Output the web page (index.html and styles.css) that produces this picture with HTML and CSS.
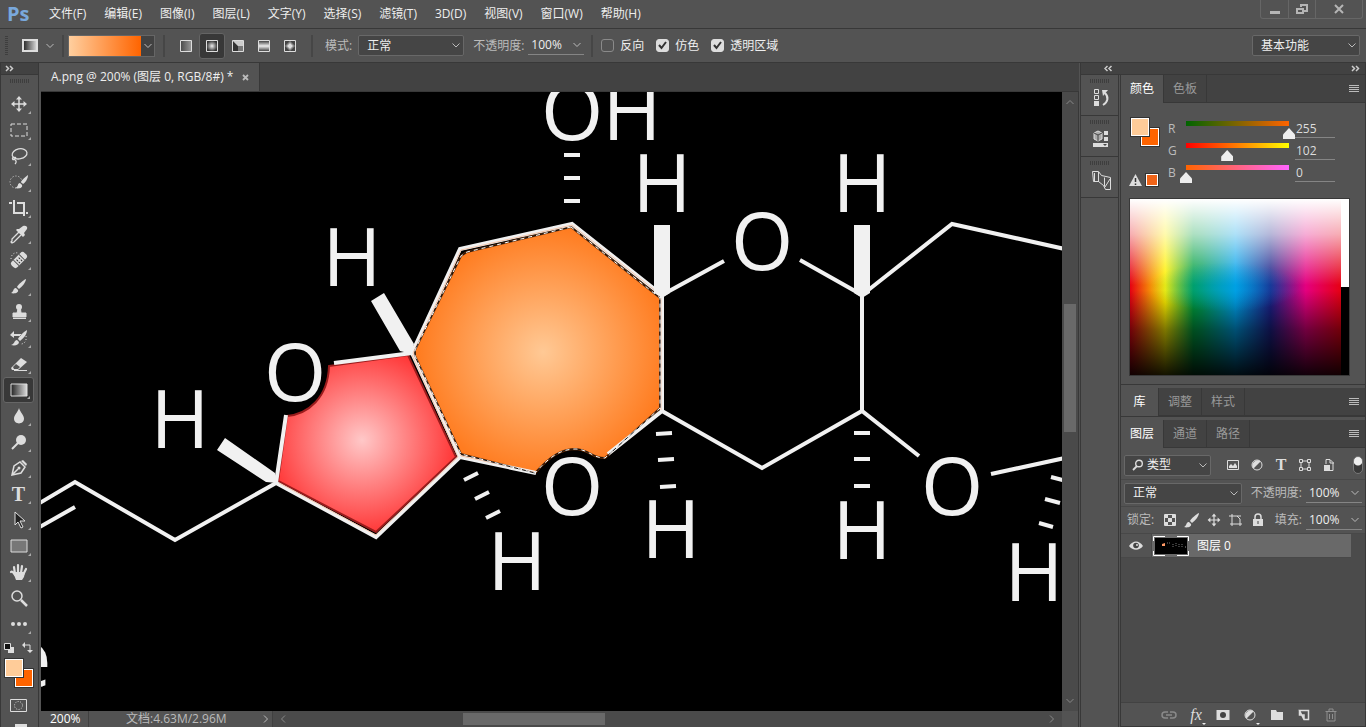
FILE: index.html
```html
<!DOCTYPE html>
<html lang="zh-CN">
<head>
<meta charset="utf-8">
<title>A.png - Photoshop</title>
<link rel="stylesheet" href="styles.css">
</head>
<body>
<svg class="defs" aria-hidden="true">
  <defs>
    <linearGradient id="gray" x1="0" x2="1"><stop stop-color="#222"/><stop offset="1" stop-color="#ddd"/></linearGradient>
    <linearGradient id="soft" x1="0" x2="1"><stop stop-color="#484848"/><stop offset="1" stop-color="#999"/></linearGradient>
    <linearGradient id="reflect" x1="0" x2="0" y1="0" y2="1"><stop stop-color="#333"/><stop offset=".5" stop-color="#eee"/><stop offset="1" stop-color="#333"/></linearGradient>
    <radialGradient id="spot"><stop stop-color="#eee"/><stop offset="1" stop-color="#333"/></radialGradient>
  </defs>
  <symbol id="chev" viewBox="0 0 10 8"><path d="M1.500 2l3.500 3.500L8.500 2" fill="none" stroke="currentColor"/></symbol>
  <symbol id="menu" viewBox="0 0 10 8"><path d="M0 .5h10M0 2.500h10M0 4.500h10M0 6.500h10" stroke="currentColor"/></symbol>
  <symbol id="brush" viewBox="-10 -10 20 20"><path d="M7-7C4-6-1-1-2 1l2 2C3 1 7-4 7-7zM-3 2c-3-.5-2 4-5 5 3 1 8 0 7-3z" fill="currentColor"/></symbol>
  <symbol id="move" viewBox="-10 -10 20 20"><path d="M-6 0H6M0-6V6" stroke="currentColor" stroke-width="1.500"/><path d="M0-8l3 3.500h-6zM0 8l3-3.500h-6zM-8 0l3.500-3v6zM8 0L4.500-3v6z" fill="currentColor"/></symbol>
  <symbol id="half" viewBox="-10 -10 20 20"><circle r="5" fill="none" stroke="currentColor"/><path d="M-3.500 3.500A5 5 0 0 1 3.500-3.500z" fill="currentColor"/></symbol>
</svg>
<div class="app">
  <header class="menubar">
    <span class="logo">Ps</span>
    <nav class="menus">
      <button>文件(F)</button><button>编辑(E)</button><button>图像(I)</button><button>图层(L)</button><button>文字(Y)</button><button>选择(S)</button><button>滤镜(T)</button><button>3D(D)</button><button>视图(V)</button><button>窗口(W)</button><button>帮助(H)</button>
    </nav>
    <div class="window-buttons">
      <button aria-label="最小化"><svg width="14" height="14"><path d="M2 10.500h10" stroke="#b5b5b5" stroke-width="3"/></svg></button>
      <button aria-label="还原"><svg width="14" height="14" fill="none" stroke="#b5b5b5" stroke-width="2"><path d="M6 5V3h6v6H9"/><path d="M2 7h6v4H2z"/></svg></button>
      <button class="close" aria-label="关闭"><svg width="14" height="14"><path d="M3 3l8 8M11 3l-8 8" stroke="#b5b5b5" stroke-width="2"/></svg></button>
    </div>
  </header>

  <section class="options">
    <span class="grip-v"></span>
    <button class="preset" aria-label="渐变工具"><svg width="16" height="13"><path d="M1 1h14v11H1z" fill="url(#gray)" stroke="#ddd" stroke-width="2"/></svg><svg class="chev"><use href="#chev"/></svg></button>
    <span class="sep"></span>
    <button class="gradient" aria-label="编辑渐变"><span class="ramp"></span><svg class="chev"><use href="#chev"/></svg></button>
    <span class="sep"></span>
    <div class="modes">
      <button aria-label="线性渐变"><svg width="12" height="12"><path d="M.5.5h11v11H.5z" fill="url(#soft)" stroke="#ddd"/></svg></button>
      <button class="active" aria-label="径向渐变"><svg width="12" height="12"><path d="M.5.5h11v11H.5z" fill="url(#spot)" stroke="#ddd"/></svg></button>
      <button aria-label="角度渐变"><svg width="12" height="12"><path d="M.5.5h11v11H.5z" fill="#777" stroke="#ddd"/><path d="M1 1l5 5v5H1z" fill="#333"/><path d="M1 1h10v5H6z" fill="#ccc"/></svg></button>
      <button aria-label="对称渐变"><svg width="12" height="12"><path d="M.5.5h11v11H.5z" fill="url(#reflect)" stroke="#ddd"/></svg></button>
      <button aria-label="菱形渐变"><svg width="12" height="12"><path d="M.5.5h11v11H.5z" fill="#444" stroke="#ddd"/><path d="M6 1l5 5-5 5-5-5z" fill="#888"/><path d="M6 3l3 3-3 3-3-3z" fill="#ddd"/></svg></button>
    </div>
    <span class="sep"></span>
    <label class="dim" for="mode">模式:</label>
    <select id="mode" class="select mode-select"><option>正常</option></select>
    <label class="dim opacity-label" for="opacity">不透明度:</label>
    <span class="field"><input id="opacity" value="100%"><svg class="chev"><use href="#chev"/></svg></span>
    <span class="sep"></span>
    <div class="checks">
      <label><input type="checkbox">反向</label>
      <label><input type="checkbox" checked>仿色</label>
      <label><input type="checkbox" checked>透明区域</label>
    </div>
    <select class="select workspace" aria-label="工作区"><option>基本功能</option></select>
  </section>

  <main class="work">
    <aside class="toolbar">
      <div class="dock-head"><svg width="9" height="7"><path d="M1 1l2.500 2.500L1 6M5 1l2.500 2.500L5 6" fill="none" stroke="#ccc" stroke-width="1.500"/></svg></div>
      <div class="grip"></div>
      <div class="tools">
        <button aria-label="移动"><svg><use href="#move"/></svg></button>
        <button aria-label="矩形选框"><svg viewBox="-10 -10 20 20"><path d="M-8-6H8V6H-8z" fill="none" stroke="#ddd" stroke-dasharray="4 2"/></svg></button>
        <button aria-label="套索"><svg viewBox="-10 -10 20 20" fill="none" stroke="#ddd" stroke-width="1.300"><ellipse cx="1" cy="-2" rx="7.500" ry="5" transform="rotate(-12)"/><path d="M-5 1c-3 1-1 4 1 2s-1-2-2-1M-4 4c2 1 1 3 0 4"/></svg></button>
        <button aria-label="快速选择"><svg viewBox="-10 -10 20 20"><circle cx="-3" r="6" fill="none" stroke="#ddd" stroke-dasharray="1 2"/><path d="M9-7C6-5 3-2 2 0l2 2c2-1 5-5 5-9zM1 1c-3 0-1 4-5 5 4 1 8 0 7-3z" fill="#ddd"/></svg></button>
        <button aria-label="裁剪"><svg viewBox="-10 -10 20 20"><path d="M-10-5h3M-5-8V5H5M-2-5h7V8M7 5h2" fill="none" stroke="#ddd" stroke-width="2"/></svg></button>
        <button aria-label="吸管"><svg viewBox="-10 -10 20 20"><path d="M0-2l-7 7v2l-1 1 1 1 2-1 7-7" fill="none" stroke="#ddd" stroke-width="1.300"/><path d="M-2-5l2 0 4-3c3-1 5 1 4 3L5-1l1 2-2 2-7-7z" fill="#ddd"/></svg></button>
        <button aria-label="修复画笔"><svg viewBox="-10 -10 20 20"><path d="M-8-1c0-4 3-7 7-6" fill="none" stroke="#ddd" stroke-dasharray="1 2"/><g transform="rotate(-45)"><rect x="-9" y="-4" width="18" height="8" rx="3" fill="#ddd"/><path d="M-4-4v8M4-4v8" stroke="#555"/><path d="M-2-1h1M1-1h1M-2 2h1M1 2h1" stroke="#333" stroke-width="2"/></g></svg></button>
        <button aria-label="画笔"><svg><use href="#brush"/></svg></button>
        <button aria-label="仿制图章"><svg viewBox="-10 -10 20 20"><circle cy="-5" r="3" fill="#ddd"/><path d="M-1-3h2.500L2 1h5v4H-6V1h4zM-6 6.500H7" fill="#ddd" stroke="#ddd"/></svg></button>
        <button aria-label="历史记录画笔"><svg viewBox="-10 -10 20 20"><path d="M-9-3l4-4v3h7v2h-7v2zM8-8C4-6 0-1-1 1l2 2c4-3 7-7 7-11zM-2 2c-3 0-2 4-6 5 4 1 8 0 8-3z" fill="#ddd"/><path d="M7-2c1 5-2 8-5 8" fill="none" stroke="#ddd" stroke-dasharray="1 2"/></svg></button>
        <button aria-label="橡皮擦"><svg viewBox="-10 -10 20 20"><path d="M-8 4L2-6l6 4L-1 6h-6z" fill="#ddd"/><path d="M-6 3l3-3 4 3-2 2h-4z" fill="#555"/><path d="M-5 6.500H8" stroke="#ddd"/></svg></button>
        <button class="active" aria-label="渐变"><svg viewBox="-10 -10 20 20"><path d="M-8-6H8V6H-8z" fill="url(#gray)" stroke="#ddd"/></svg></button>
        <button aria-label="模糊"><svg viewBox="-10 -10 20 20"><path d="M0-8c1 4 5 7 5 10.500C5 9-5 9-5 2.500-5-1-1-4 0-8z" fill="#ddd"/></svg></button>
        <button aria-label="减淡"><svg viewBox="-10 -10 20 20"><circle cx="2" cy="-2" r="5" fill="#ddd"/><path d="M-1 1l-6 6" stroke="#ddd" stroke-width="2"/></svg></button>
        <button aria-label="钢笔"><svg viewBox="-10 -10 20 20"><path d="M-7 7l2-9 6-4 5 5-4 6zM-7 7l6-6" fill="none" stroke="#ddd" stroke-width="1.500"/><circle r="1.500" fill="#ddd"/><path d="M2-7l5 5 1-2-4-4z" fill="#ddd"/></svg></button>
        <button class="type-tool" aria-label="文字"><b>T</b></button>
        <button aria-label="路径选择"><svg viewBox="-10 -10 20 20"><path d="M-4-8V5l3-3 3 6 2-1-3-6h5z" fill="#222" stroke="#ddd"/></svg></button>
        <button aria-label="矩形"><svg viewBox="-10 -10 20 20"><path d="M-8-6H8V6H-8z" fill="#777" stroke="#ddd"/></svg></button>
        <button aria-label="抓手"><svg viewBox="-10 -10 20 20"><path d="M-8 0c1-1 2 0 4 3M-4 2l-1-7M-1 1v-8M2 1l1-7M4 3l3-6" stroke="#ddd" stroke-width="2.200" stroke-linecap="round" fill="none"/><path d="M-6 0L6 0 5 5 3 8h-6z" fill="#ddd"/></svg></button>
        <button class="single" aria-label="缩放"><svg viewBox="-10 -10 20 20"><circle cx="-2" cy="-2" r="5" fill="none" stroke="#ddd" stroke-width="1.500"/><path d="M2 2l6 6" stroke="#ddd" stroke-width="2.500"/></svg></button>
        <button aria-label="更多"><svg viewBox="-10 -10 20 20" fill="#ddd"><circle cx="-6" r="2"/><circle r="2"/><circle cx="6" r="2"/></svg></button>
      </div>
      <div class="swatch-tools">
        <button aria-label="默认颜色"><svg width="10" height="10"><path d="M4 4h6v6H4z" fill="#ddd"/><path d="M.5.5h6v6h-6z" fill="#111" stroke="#ddd"/></svg></button>
        <button aria-label="切换颜色"><svg width="11" height="11"><path d="M2 3h6v6" fill="none" stroke="#ddd"/><path d="M3 0v6L0 3zM5 8h6l-3 3z" fill="#ddd"/></svg></button>
      </div>
      <div class="swatches"><button class="fg" aria-label="前景色"></button><button class="bg" aria-label="背景色"></button></div>
      <button class="mask" aria-label="快速蒙版"><svg width="17" height="13"><path d="M.5.5h16v12H.5z" fill="none" stroke="#ddd"/><circle cx="8.500" cy="6.500" r="4" fill="none" stroke="#ddd" stroke-dasharray="1 1.500"/></svg></button>
      <button class="screen" aria-label="屏幕模式"></button>
    </aside>

    <section class="document">
      <div class="doc-tabs"><div class="doc-tab"><span>A.png @ 200% (图层 0, RGB/8#) *</span><button aria-label="关闭文档"><svg width="7" height="7"><path d="M1 1l5 5M6 1L1 6" stroke="#bbb" stroke-width="1.800"/></svg></button></div></div>
      <div class="stage">
        <div class="canvas">
          <svg viewBox="41 92 1021 619" preserveAspectRatio="xMinYMin slice">
            <defs>
              <radialGradient id="orange" gradientUnits="userSpaceOnUse" cx="543" cy="352" r="125"><stop stop-color="#ffc995"/><stop offset="1" stop-color="#ff7c20"/></radialGradient>
              <radialGradient id="red" gradientUnits="userSpaceOnUse" cx="362" cy="440" r="96"><stop stop-color="#ffc8c8"/><stop offset="1" stop-color="#ff3434"/></radialGradient>
            </defs>
            <path d="M329 366L408 355 456 457 376 532 278 481 287 416C308 414 328 398 329 366z" fill="url(#red)" stroke="#9a1c1c" stroke-width="2"/>
            <path d="M571 227L467 252 461 256 415 350 415 356 461 454 535 473C551 455 562 449 576 449 590 450 592 458 605 458L660 408V298z" fill="url(#orange)" stroke="#7a3508" stroke-width="2"/>
            <g class="bonds">
              <path d="M662 295L572 224 460 249 412 353 460 457 536 473M608 454L662 411V295L724 261M334 363L412 353M460 457L376 537 276 483 286 415M276 483L175 540 75 482 38 504M75 507L38 528M662 411L762 468 862 411 919 456M862 411V295L800 260M862 295L952 224 1065 249M991 474L1065 458"/>
              <path d="M564 155h16M564 178h16M564 201h16M656 434l16-1M658 460l16-1M660 487l16-1M854 433h16M854 459h16M854 486h16M464 480l14-7M475 499l14-7M486 518l14-7M1051 477l15 4M1045 499l15 4M1039 523l14 4"/>
            </g>
            <path class="warm" d="M661 295L572 225 461 250 413 353 461 456 534 472M412 355L458 457 376 535 279 483M661 298V410"/>
            <path class="wedges" d="M654 225h16v68l-8 5-8-5zM854 225h16v68l-8 5-8-5zM371 301l13-8 30 51-2 10-12-3zM217 450l8-12 50 35 2 10-11-1z"/>
            <path class="ants" d="M571 227L467 252 461 256 415 350 415 356 461 454 535 473C551 455 562 449 576 449 590 450 592 458 605 458L660 408V298z"/>
            <path class="ants march" d="M571 227L467 252 461 256 415 350 415 356 461 454 535 473C551 455 562 449 576 449 590 450 592 458 605 458L660 408V298z"/>
            <g class="atoms">
              <text x="572" y="140">O</text><text x="632" y="140">H</text><text x="662" y="212">H</text><text x="862" y="212">H</text><text x="762" y="270">O</text><text x="352" y="286">H</text><text x="295" y="401">O</text><text x="180" y="448">H</text><text x="572" y="515">O</text><text x="517" y="590">H</text><text x="671" y="558">H</text><text x="862" y="559">H</text><text x="952" y="515">O</text><text x="1034" y="601">H</text><text x="29" y="687">e</text>
            </g>
          </svg>
        </div>
        <div class="vscroll"><svg class="chev up"><use href="#chev"/></svg><div class="vtrack"><i></i><b></b><i class="after"></i></div><svg class="chev"><use href="#chev"/></svg></div>
      </div>
      <footer class="status"><span class="zoom">200%</span><span class="docsize">文档:4.63M/2.96M</span><button aria-label="状态菜单"><svg class="chev right"><use href="#chev"/></svg></button>
        <div class="hscroll"><svg class="chev left"><use href="#chev"/></svg><div class="htrack"><i></i><b></b><i class="after"></i></div><svg class="chev right"><use href="#chev"/></svg></div><span class="corner"></span>
      </footer>
    </section>

    <aside class="docks">
      <div class="dock-head wide"><svg width="9" height="7"><path d="M3.500 1L1 3.500 3.500 6M7.500 1L5 3.500 7.500 6" fill="none" stroke="#ccc" stroke-width="1.500"/></svg><svg width="9" height="7"><path d="M1 1l2.500 2.500L1 6M5 1l2.500 2.500L5 6" fill="none" stroke="#ccc" stroke-width="1.500"/></svg></div>
      <div class="dock-cols">
        <div class="icon-dock">
          <div class="icon-group"><span class="grip"></span><button aria-label="历史记录"><svg viewBox="0 0 20 20"><path d="M2.500 1.500h4v4h-4zM2.500 7.500h4v4h-4z" fill="none" stroke="#ddd"/><path d="M2 13h5v5H2z" fill="#ddd"/><path d="M11 17c5-3 6-8 2-12" fill="none" stroke="#ddd" stroke-width="2"/><path d="M10 2h6l-5 6z" fill="#ddd"/></svg></button></div>
          <div class="icon-group"><span class="grip"></span><button aria-label="属性"><svg viewBox="0 0 20 20"><path d="M6 2l4 2v6l-4 2-4-2V4z" fill="#aaa" stroke="#ddd"/><path d="M2 4l4 2 4-2M6 6v6" fill="none" stroke="#444"/><path d="M12 2h4v4h-4zM12 8h4v4h-4zM1 14h15v4H1z" fill="#ddd"/><path d="M11 15h4l-2 2z" fill="#444"/></svg></button></div>
          <div class="icon-group"><span class="grip"></span><button aria-label="其他面板"><svg viewBox="0 0 20 20" fill="none" stroke="#ddd"><path d="M.5 1.500h6l3 4 9 2v12h-5l-2-4-5-4h-5zM2.500 3v8M6.500 2v10M12.500 7.500v9M18 9l-5 8"/></svg></button></div>
        </div>
        <div class="panels">
          <section class="panel">
            <div class="tabs"><button class="on">颜色</button><button>色板</button><svg class="burger"><use href="#menu"/></svg></div>
            <div class="color-body">
              <div class="color-top">
                <div class="color-left"><div class="swatches"><button class="fg" aria-label="前景"></button><button class="bg" aria-label="背景"></button></div>
                  <div class="warning"><svg width="13" height="12"><path d="M6.500 0L13 12H0z" fill="#ddd"/><path d="M6.500 4v4M6.500 9.500V11" stroke="#333" stroke-width="1.500"/></svg><span></span></div></div>
                <div class="sliders">
                  <label for="r">R</label><input id="r" class="r" type="range" max="255" value="255"><input aria-label="R 值" value="255">
                  <label for="g">G</label><input id="g" class="g" type="range" max="255" value="102"><input aria-label="G 值" value="102">
                  <label for="b">B</label><input id="b" class="b" type="range" max="255" value="0"><input aria-label="B 值" value="0">
                </div>
              </div>
              <div class="spectrum"><div class="hues"></div><div class="bw"></div></div>
            </div>
          </section>
          <section class="panel"><div class="tabs"><button class="on">库</button><button>调整</button><button>样式</button><svg class="burger"><use href="#menu"/></svg></div></section>
          <section class="panel layers">
            <div class="tabs"><button class="on">图层</button><button>通道</button><button>路径</button><svg class="burger"><use href="#menu"/></svg></div>
            <div class="filter-row">
              <span class="search-select"><svg width="12" height="12"><circle cx="7" cy="4.500" r="3.300" fill="none" stroke="#ddd" stroke-width="1.400"/><path d="M5 7l-4 4" stroke="#ddd" stroke-width="1.800"/></svg><select class="select" aria-label="图层过滤"><option>类型</option></select></span>
              <div class="filters">
                <button aria-label="像素"><svg viewBox="-10 -10 20 20"><path d="M-5.500-4.500h11v9h-11z" fill="none" stroke="#ddd"/><path d="M-4 3v-2l2-2 2 2 2-3 2 3v2z" fill="#ddd"/></svg></button>
                <button aria-label="调整图层"><svg><use href="#half"/></svg></button>
                <button aria-label="文字图层"><b>T</b></button>
                <button aria-label="形状图层"><svg viewBox="-10 -10 20 20"><path d="M-4-4h8v8h-8z" fill="none" stroke="#ddd"/><path d="M-5.500-5.500h3v3h-3zM2.500-5.500h3v3h-3zM-5.500 2.500h3v3h-3zM2.500 2.500h3v3h-3z" fill="#535353" stroke="#ddd"/></svg></button>
                <button aria-label="智能对象"><svg viewBox="-10 -10 20 20"><path d="M-3-1v-4.500h4l3 3v8H1M1-5v3h4" fill="none" stroke="#ddd"/><path d="M-5 0h6v6h-6z" fill="#ddd"/></svg></button>
              </div>
              <button class="toggle" aria-label="过滤开关"></button>
            </div>
            <div class="blend-row"><select class="select" aria-label="混合模式"><option>正常</option></select><label class="dim" for="lop">不透明度:</label><span class="field"><input id="lop" value="100%"><svg class="chev"><use href="#chev"/></svg></span></div>
            <div class="lock-row"><span class="dim">锁定:</span>
              <div class="locks">
                <button aria-label="锁定透明像素"><svg viewBox="-10 -10 20 20"><path d="M-5.500-5.500h11v11h-11z" fill="none" stroke="#ddd"/><path d="M-5-5h3v3h-3zM2-5h3v3H2zM-2-2h4v4h-4zM-5 2h3v3h-3zM2 2h3v3H2z" fill="#ddd"/></svg></button>
                <button aria-label="锁定图像像素"><svg><use href="#brush"/></svg></button>
                <button class="small" aria-label="锁定位置"><svg><use href="#move"/></svg></button>
                <button aria-label="锁定画板"><svg viewBox="-10 -10 20 20"><path d="M-7-4H5M-4-6V6M-6 4H6M4 6v-7L1-4" fill="none" stroke="#ddd"/></svg></button>
                <button aria-label="锁定全部"><svg viewBox="-10 -10 20 20"><path d="M-5-1H5v7H-5z" fill="#ddd"/><path d="M-3-1v-2c0-4 6-4 6 0v2" fill="none" stroke="#ddd" stroke-width="1.500"/><path d="M0 1v3" stroke="#444"/></svg></button>
              </div>
              <label class="dim" for="fill">填充:</label><span class="field"><input id="fill" value="100%"><svg class="chev"><use href="#chev"/></svg></span></div>
            <div class="layer-list">
              <div class="layer"><button class="eye" aria-label="可见性"><svg width="14" height="10"><path d="M0 5C4-1 10-1 14 5 10 10 4 10 0 5z" fill="#ddd"/><circle cx="7" cy="4.500" r="2.800" fill="#444"/><circle cx="8" cy="4" r="1" fill="#ddd"/></svg></button>
                <div class="layer-main"><svg width="36" height="20"><path d="M2 2h32v16H2z" fill="#000"/><path d="M.5 5V.5H12M24 .5h11.500V5M.5 15v4.500H12M24 19.500h11.500V15" fill="none" stroke="#fff"/><path d="M9 8l3-1v3H9z" fill="#f96"/><path d="M14 7h4M20 8v4M23 7v4M26 8v3M29 8v3" stroke="#777" stroke-dasharray="1 1"/><path d="M32 11h1" stroke="#999"/></svg><span>图层 0</span></div></div>
            </div>
            <footer class="layer-actions">
              <button aria-label="链接图层"><svg viewBox="-10 -10 20 20"><path d="M-1-3h-3c-4 0-4 6 0 6h3M1-3h3c4 0 4 6 0 6H1M-3 0h6" fill="none" stroke="#8a8a8a" stroke-width="1.500"/></svg></button>
              <button class="fx" aria-label="图层样式">fx</button>
              <button aria-label="图层蒙版"><svg viewBox="-10 -10 20 20"><path d="M-6.500-5h13V5h-13z" fill="#ddd"/><circle r="3" fill="#444"/></svg></button>
              <button class="more" aria-label="新建调整图层"><svg><use href="#half"/></svg></button>
              <button aria-label="新建组"><svg viewBox="-10 -10 20 20"><path d="M-6-5h5l1 2h6v8H-6z" fill="#ddd"/></svg></button>
              <button aria-label="新建图层"><svg viewBox="-10 -10 20 20"><path d="M-4.500-4.500h9v9H0zM-4.500-4.500V0H0v4.500" fill="none" stroke="#ddd" stroke-width="1.500"/></svg></button>
              <button aria-label="删除图层"><svg viewBox="-10 -10 20 20" fill="none" stroke="#8f8f8f"><path d="M-5.500-3.500h11M-2-4v-2h4v2M-4-3v9h8v-9M-1.500-1v5M1.500-1v5"/></svg></button>
            </footer>
          </section>
        </div>
      </div>
    </aside>
  </main>
</div>
</body>
</html>
```

FILE: styles.css
```css
* { box-sizing: border-box; }
html, body { height: 100%; }
body { margin: 0; background: #535353; color: #eee; font: 12px/16px "Open Sans", "Noto Sans CJK SC", sans-serif; overflow: hidden; }
button, input, select { font: inherit; color: inherit; margin: 0; padding: 0; border: 0; background: none; border-radius: 0; outline: 0; }
button { display: flex; align-items: center; justify-content: center; }
svg { display: block; flex: none; }
.defs { position: absolute; width: 0; height: 0; }
.app { height: 100vh; display: flex; flex-direction: column; }
.dim { color: #bbb; white-space: nowrap; }
.chev { width: 10px; height: 8px; color: #bbb; }

.menubar { display: flex; align-items: center; height: 29px; flex: none; border-bottom: 1px solid #383838; padding-right: 3px; }
.logo { width: 49px; padding-left: 7px; color: #79a8dc; font: bold 20px/24px "Open Sans", sans-serif; }
.menus { display: flex; gap: 18px; flex: 1; }
.menus button { white-space: nowrap; }
.window-buttons { display: flex; align-self: flex-start; height: 19px; border: 1px solid #666; border-top: 0; border-radius: 0 0 3px 3px; }
.window-buttons button { width: 27px; }
.window-buttons button + button { border-left: 1px solid #666; }
.window-buttons .close { width: 47px; }

.options { display: flex; align-items: center; height: 34px; flex: none; border-bottom: 1px solid #383838; padding: 0 6px 0 5px; }
.grip-v { width: 3px; height: 19px; background: repeating-linear-gradient(#3e3e3e 0 1px, transparent 1px 2px); }
.preset { gap: 7px; margin: 0 7px 0 14px; }
.sep { width: 2px; height: 22px; background: #464646; flex: none; }
.gradient { height: 22px; border: 1px solid #666; margin: 0 8px 0 4px; background: #424242; }
.ramp { width: 72px; height: 20px; background: linear-gradient(90deg, #ffcf9f, #ff6400); }
.gradient .chev { margin: 0 1px 0 2px; }
.modes { display: flex; margin: 0 8px; }
.modes button { width: 26px; height: 26px; border-radius: 3px; }
.modes .active { background: #383838; border: 1px solid #646464; }
.sep + .dim { margin-left: 12px; }
.select { appearance: none; height: 21px; border: 1px solid #686868; border-radius: 2px; background: #454545 url("data:image/svg+xml,%3Csvg xmlns='http://www.w3.org/2000/svg' width='8' height='5'%3E%3Cpath d='M.5.5 4 4 7.500.5' fill='none' stroke='%23bbb'/%3E%3C/svg%3E") no-repeat right 3px center; padding: 0 14px 0 8px; }
.mode-select { width: 106px; margin-left: 6px; }
.opacity-label { margin-left: 9px; }
.field { display: flex; align-items: center; width: 56px; height: 19px; border-bottom: 1px solid #858585; padding: 0 2px 0 3px; }
.field input { flex: 1; min-width: 0; }
.opacity-label + .field { margin: 0 7px 0 4px; }
.checks { display: flex; gap: 12px; flex: 1; margin-left: 8px; }
.checks label { display: flex; align-items: center; gap: 6px; white-space: nowrap; }
.checks input { appearance: none; width: 13px; height: 13px; border: 1px solid #8a8a8a; border-radius: 3px; }
.checks input:checked { border-color: #ddd; background: #ddd url("data:image/svg+xml,%3Csvg xmlns='http://www.w3.org/2000/svg' width='11' height='11'%3E%3Cpath d='M2 5l2.500 3L9 2' fill='none' stroke='%23333' stroke-width='2'/%3E%3C/svg%3E") center; }
.workspace { width: 108px; }

.work { display: flex; flex: 1; min-height: 0; }
.toolbar { width: 39px; flex: none; margin-right: 2px; border: solid #383838; border-width: 0 1px; overflow: hidden; }
.dock-head { height: 12px; display: flex; align-items: center; padding-left: 4px; background: #424242; border-bottom: 1px solid #383838; }
.grip { display: block; width: 19px; height: 4px; background: repeating-linear-gradient(90deg, #3e3e3e 0 1px, transparent 1px 2px); }
.toolbar .grip { margin: 4px 0 8px 9px; }
.tools { padding: 0 4px 0 2px; }
.tools button { position: relative; width: 31px; height: 26px; border-radius: 3px; color: #ddd; }
.tools svg { width: 20px; height: 20px; }
.tools button::after { content: ""; position: absolute; right: 3px; bottom: 3px; width: 3px; height: 3px; background: #aaa; clip-path: polygon(100% 0, 100% 100%, 0 100%); }
.tools .single::after { display: none; }
.tools .active { background: #383838; border: 1px solid #666; }
.type-tool b, .filters b { font: bold 20px/20px "Liberation Serif", serif; }
.swatch-tools { display: flex; gap: 8px; padding: 5px 3px 4px; height: 20px; }
.swatches { position: relative; height: 34px; }
.swatches button { position: absolute; left: 14px; top: 12px; width: 18px; height: 18px; background: #ff6400; border: 1px solid #fff; outline: 1px solid #333; }
.swatches .fg { left: 4px; top: 2px; z-index: 1; background: #ffcc99; }
.mask { margin: 8px 0 12px 9px; }
.screen { width: 12px; height: 3px; background: #ddd; margin-left: 14px; }

.document { flex: 1; min-width: 0; display: flex; flex-direction: column; }
.doc-tabs { height: 29px; flex: none; background: #424242; border-bottom: 1px solid #383838; display: flex; }
.doc-tab { display: flex; align-items: center; gap: 9px; padding: 0 10px; background: #535353; border-right: 1px solid #383838; white-space: nowrap; }
.stage { flex: 1; min-height: 0; display: flex; }
.canvas { flex: 1; min-width: 0; background: #000; overflow: hidden; }
.canvas > svg { width: 100%; height: 100%; }
.bonds path { fill: none; stroke: #f1f1f1; stroke-width: 4; }
.warm { fill: none; stroke: #f6c9b0; stroke-width: 1; }
.wedges { fill: #f1f1f1; }
.ants { fill: none; stroke: #111; stroke-width: 1; }
.ants.march { stroke: #fff; stroke-dasharray: 4 4; }
.atoms { font: 80px "Open Sans", sans-serif; fill: #f1f1f1; text-anchor: middle; }
.vscroll { width: 17px; display: flex; flex-direction: column; align-items: center; padding: 6px 0; background: #4a4a4a; border-right: 1px solid #383838; }
.vscroll .chev, .hscroll .chev { color: #888; }
.vtrack { flex: 1; width: 12px; display: flex; flex-direction: column; }
.vtrack b { flex: 128; background: #696969; }
.vtrack i { flex: 198; }
.vtrack .after { flex: 265; }
.up { transform: rotate(180deg); }
.left { transform: rotate(90deg); }
.right { transform: rotate(-90deg); }
.status { height: 16px; flex: none; display: flex; align-items: center; color: #ddd; }
.zoom { width: 48px; padding-left: 9px; border-right: 1px solid #404040; color: #fff; }
.docsize { width: 170px; padding-left: 37px; color: #bbb; white-space: nowrap; }
.status button { width: 14px; height: 16px; border-right: 1px solid #404040; }
.hscroll { flex: 1; height: 16px; display: flex; align-items: center; background: #4a4a4a; padding: 0 5px; }
.htrack { flex: 1; height: 12px; display: flex; }
.htrack i { flex: 175; }
.htrack b { flex: 142; background: #696969; }
.htrack .after { flex: 442; }
.corner { width: 17px; height: 16px; border-right: 1px solid #383838; }

.docks { width: 286px; flex: none; margin-left: 1px; display: flex; flex-direction: column; border: solid #383838; border-width: 0 1px; }
.wide { flex: none; justify-content: space-between; padding: 0 5px 0 23px; }
.dock-cols { display: flex; flex: 1; min-height: 0; }
.icon-dock { width: 38px; border-right: 1px solid #383838; }
.icon-group { height: 41px; border-bottom: 1px solid #383838; padding: 4px 9px; }
.icon-group button { margin: 5px 0 0 2px; }
.icon-group svg { width: 20px; height: 20px; }
.panels { flex: 1; min-width: 0; display: flex; flex-direction: column; gap: 3px; margin-left: 1px; border-left: 1px solid #383838; }
.panel { border-bottom: 1px solid #383838; }
.tabs { display: flex; height: 28px; background: #424242; border-bottom: 1px solid #383838; }
.tabs button { padding: 0 9px; min-width: 38px; color: #999; border-right: 1px solid #383838; }
.tabs .on { background: #535353; color: #fff; height: 28px; }
.burger { width: 10px; height: 8px; color: #bbb; margin: 10px 6px 0 auto; }
.color-body { padding: 13px 15px 8px 8px; }
.color-top { display: flex; }
.color-left { width: 38px; display: flex; flex-direction: column; }
.color-left .swatches { height: 58px; }
.color-left .swatches button { left: 12px; }
.color-left .swatches .fg { left: 2px; }
.warning { display: flex; align-items: center; gap: 4px; }
.warning span { width: 12px; height: 12px; background: #f06418; border: 1px solid #fff; outline: 1px solid #333; }
.sliders { flex: 1; display: grid; grid-template-columns: 12px minmax(0, 1fr) 40px; grid-auto-rows: 22px; padding: 2px 15px 0 1px; color: #bbb; margin-bottom: 14px; align-items: center; }
.sliders input:not([type]) { color: #ddd; border-bottom: 1px solid #858585; height: 17px; width: 40px; padding-left: 1px; }
.sliders [type=range] { appearance: none; width: 100%; height: 22px; background: linear-gradient(90deg, #006400, #ff6400) 6px 3px / calc(100% - 12px) 5px no-repeat; }
.sliders .g { background-image: linear-gradient(90deg, #f00, #ff6400 40%, #ff0); }
.sliders .b { background-image: linear-gradient(90deg, #ff6400, #ff64ff); }
.sliders [type=range]::-webkit-slider-thumb { appearance: none; width: 12px; height: 11px; margin-top: 9px; background: #eee; clip-path: polygon(50% 0, 100% 60%, 100% 100%, 0 100%, 0 60%); }
.spectrum { display: flex; height: 178px; border: 1px solid #383838; }
.hues { flex: 1; background:
  radial-gradient(ellipse 36% 14% at 45% 50%, rgba(0,160,220,.5), transparent),
  linear-gradient(#fff 0%, rgba(255,255,255,.68) 20%, transparent 49%, transparent 52%, rgba(0,0,0,.5) 74%, rgba(0,0,0,.92) 100%),
  linear-gradient(90deg, #e60012, #fff100 16.700%, #00a040 30%, #009e58 34%, #00a0e9 50%, #1d2088 66.700%, #e4007f 83.300%, #e60012); }
.bw { width: 8px; background: linear-gradient(#fff 50%, #000 50%); }
.layers { flex: 1; min-height: 0; display: flex; flex-direction: column; }
.layers > .tabs { flex: none; }
.filter-row { display: flex; align-items: center; height: 32px; padding: 3px 2px 0 3px; border-bottom: 1px solid #484848; }
.search-select { position: relative; }
.search-select svg { position: absolute; left: 8px; top: 4px; }
.search-select .select { width: 87px; padding-left: 22px; }
.filters { display: flex; flex: 1; gap: 4px; margin-left: 12px; }
.filters button, .locks button { width: 20px; height: 20px; color: #ddd; }
.filters svg, .locks svg { width: 20px; height: 20px; }
.filters b { font-size: 16px; }
.toggle { width: 10px; height: 18px; border-radius: 5px; border: 1px solid #777; background: radial-gradient(circle at 50% 4px, #eee 4px, #383838 5px); }
.blend-row, .lock-row { display: flex; align-items: center; height: 27px; padding: 0 3px; border-bottom: 1px solid #484848; }
.blend-row .select { width: 118px; }
.blend-row .dim { margin-left: auto; margin-right: 4px; }
.lock-row { padding-left: 6px; }
.locks { display: flex; flex: 1; gap: 2px; margin-left: 6px; }
.locks .small svg { width: 16px; height: 16px; }
.lock-row label { margin-right: 4px; }
.layer-list { flex: 1; background: #4b4b4b; }
.layer { display: flex; height: 24px; margin-right: 14px; border-bottom: 1px solid #484848; }
.eye { width: 31px; background: #535353; border-right: 1px solid #484848; }
.layer-main { flex: 1; display: flex; align-items: center; gap: 8px; padding-left: 1px; background: #696969; color: #fff; }
.layer-actions { display: flex; flex: none; height: 24px; align-items: center; justify-content: flex-end; gap: 7px; padding-right: 24px; border-top: 1px solid #424242; }
.layer-actions button { position: relative; width: 20px; height: 20px; color: #ddd; }
.layer-actions svg { width: 20px; height: 20px; }
.fx { font: italic 16px/20px "Liberation Serif", serif; }
.layer-actions .fx::after, .layer-actions .more::after { content: ""; position: absolute; right: 0; bottom: 0; border: solid transparent; border-width: 2px 2px 0; border-top-color: #eee; }
```
